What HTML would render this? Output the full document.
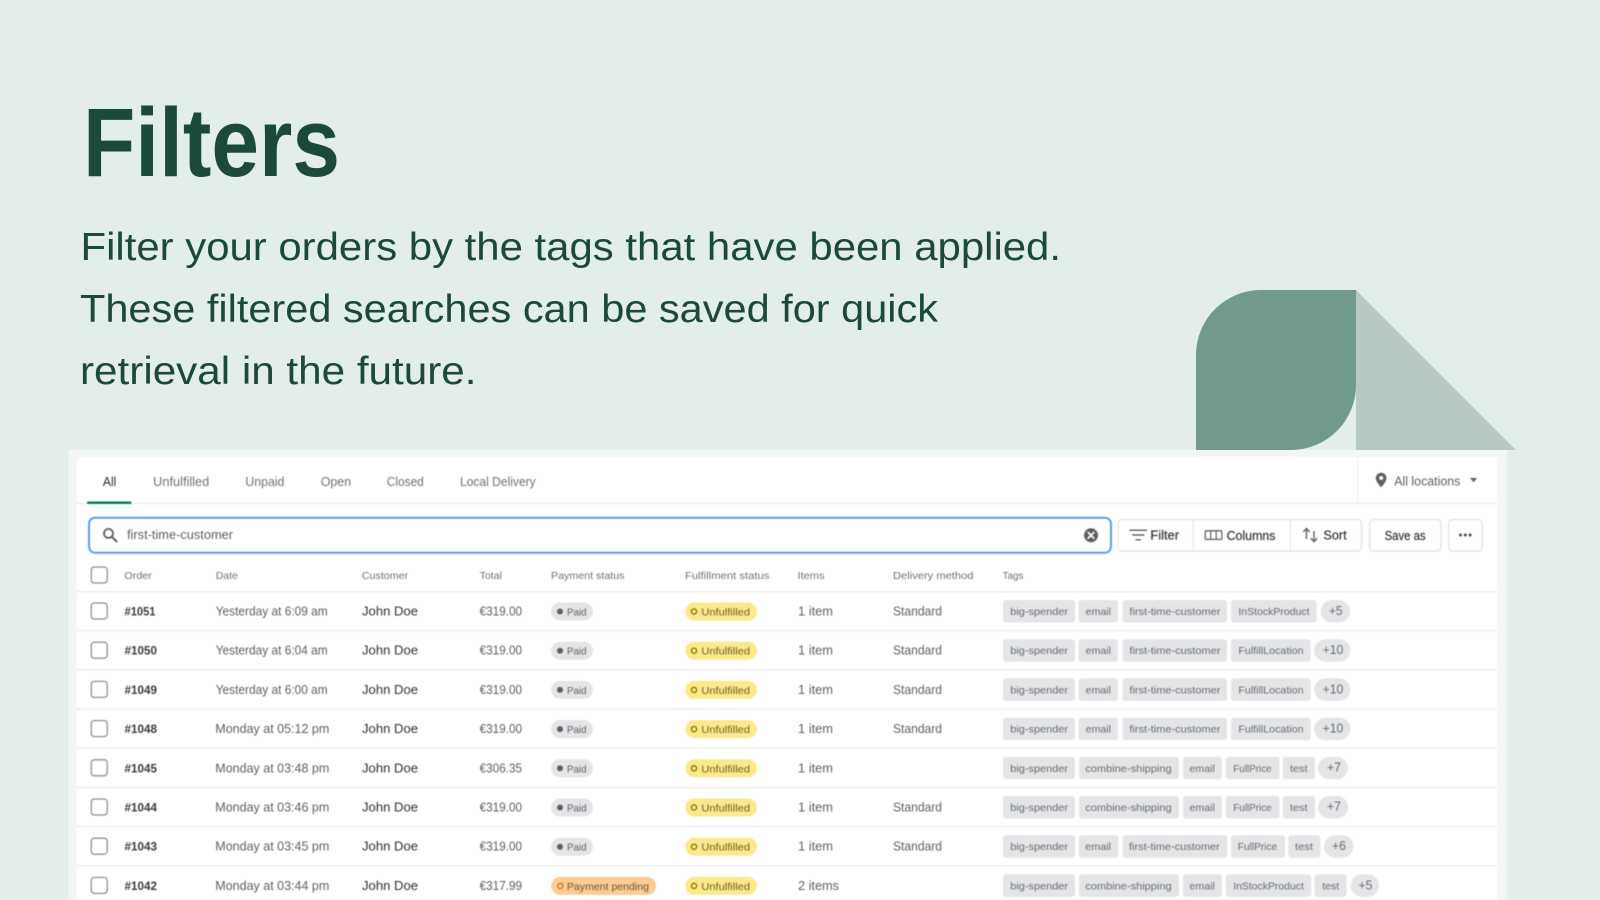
<!DOCTYPE html>
<html lang="en">
<head>
<meta charset="utf-8">
<title>Filters</title>
<style>
html,body{margin:0;padding:0;width:1600px;height:900px;overflow:hidden;background:#e3ede9}
svg{display:block;position:absolute;left:0;top:0}
text{font-family:"Liberation Sans",sans-serif}
#ui{filter:blur(.45px)}
.g{fill:#6d7175;font-size:12.5px}
.h{fill:#6d7175;font-size:10.5px}
.o{fill:#3a3a3a;font-size:12px;font-weight:bold}
.d{fill:#5c5f62;font-size:12.5px}
.n{fill:#303030;font-size:13px}
.b{fill:#5c5f62;font-size:10.5px}
.y{fill:#6b5f2a;font-size:10.5px}
.t{fill:#666a70;font-size:10.5px}
.p{fill:#666a70;font-size:13px}
.k{fill:#e4e5e7}
.btn{fill:#303438;font-size:12.5px}
.cb{fill:#fff;stroke:#8c9196;stroke-width:1.3}
.ln{stroke:#eceef0;stroke-width:1.5}
</style>
</head>
<body>
<svg width="1600" height="900" viewBox="0 0 1600 900" xmlns="http://www.w3.org/2000/svg">
<rect width="1600" height="900" fill="#e3ede9"/>
<text x="83" y="176" font-size="97" font-weight="bold" fill="#1c4a3a" textLength="257" lengthAdjust="spacingAndGlyphs">Filters</text>
<g fill="#1c4a3a" font-size="39">
<text x="80.5" y="260" textLength="980.5" lengthAdjust="spacingAndGlyphs">Filter your orders by the tags that have been applied.</text>
<text x="80" y="322" textLength="858" lengthAdjust="spacingAndGlyphs">These filtered searches can be saved for quick</text>
<text x="80" y="384" textLength="396.5" lengthAdjust="spacingAndGlyphs">retrieval in the future.</text>
</g>
<path d="M1261 290H1356V385A65 65 0 0 1 1291 450H1196V355A65 65 0 0 1 1261 290Z" fill="#709b8c"/>
<path d="M1356 290L1516 450H1356Z" fill="#b5c9c2"/>
<rect x="68.5" y="450" width="1438.5" height="450" fill="#f3f5f6"/>
<g id="ui">
<path d="M76.5 900V463A6 6 0 0 1 82.5 457H1491A6 6 0 0 1 1497 463V900Z" fill="#fff"/>

<text class="g" x="102.9" y="486" textLength="13.5" lengthAdjust="spacingAndGlyphs" style="fill:#303030">All</text>
<text class="g" x="153.2" y="486" textLength="56" lengthAdjust="spacingAndGlyphs">Unfulfilled</text>
<text class="g" x="245.4" y="486" textLength="39" lengthAdjust="spacingAndGlyphs">Unpaid</text>
<text class="g" x="320.7" y="486" textLength="30.5" lengthAdjust="spacingAndGlyphs">Open</text>
<text class="g" x="386.8" y="486" textLength="37" lengthAdjust="spacingAndGlyphs">Closed</text>
<text class="g" x="460" y="486" textLength="75.7" lengthAdjust="spacingAndGlyphs">Local Delivery</text>
<line x1="76.5" x2="1497" y1="503.5" y2="503.5" stroke="#e8eaec" stroke-width="1"/>
<rect x="87" y="501.5" width="44.5" height="2.5" rx="1" fill="#008060"/>
<line x1="1357.8" x2="1357.8" y1="457" y2="503" stroke="#eceef0" stroke-width="1"/>
<path d="M1381.2 472.7c-3 0-5.4 2.4-5.4 5.3 0 3.8 5.4 9.3 5.4 9.3s5.3-5.5 5.3-9.3c0-2.9-2.4-5.3-5.3-5.3zm0 7.3a2 2 0 1 1 0-4 2 2 0 0 1 0 4z" fill="#5c5f62"/>
<text class="g" x="1394.2" y="485.5" textLength="66.2" lengthAdjust="spacingAndGlyphs" style="fill:#5c5f62">All locations</text>
<path d="M1470 478h7.2l-3.6 4.2z" fill="#5c5f62"/>

<rect x="89" y="517.7" width="1022" height="35" rx="6" fill="#fff" stroke="#5a9bf0" stroke-width="2"/>
<circle cx="108.5" cy="533.4" r="4.5" fill="none" stroke="#5c5f62" stroke-width="1.8"/>
<path d="M111.8 536.8l4.8 4.6" stroke="#5c5f62" stroke-width="2" stroke-linecap="round"/>
<text x="127" y="539" font-size="12.5" fill="#5c5f62" textLength="106" lengthAdjust="spacingAndGlyphs">first-time-customer</text>
<circle cx="1091" cy="535.3" r="7" fill="#5c5f62"/>
<path d="M1088.2 532.5l5.6 5.6M1093.8 532.5l-5.6 5.6" stroke="#fff" stroke-width="1.7" stroke-linecap="round"/>

<rect x="1118" y="519.5" width="243.5" height="31.5" rx="4" fill="#fff" stroke="#dfe1e4" stroke-width="1.2"/>
<path d="M1193.3 520v31M1290.5 520v31" stroke="#e3e4e6" stroke-width="1"/>
<path d="M1130 530.2h16.5M1132.8 535h11M1136 539.8h4.5" stroke="#5c5f62" stroke-width="1.4" stroke-linecap="round"/>
<text class="btn" x="1150.4" y="539.5" textLength="28.6" lengthAdjust="spacingAndGlyphs" font-weight="bold" style="font-weight:normal;stroke:#303438;stroke-width:.2">Filter</text>
<rect x="1205.2" y="530.8" width="16.6" height="8.6" rx="1.2" fill="none" stroke="#5c5f62" stroke-width="1.3"/>
<path d="M1210.8 530.8v8.6M1216.2 530.8v8.6" stroke="#5c5f62" stroke-width="1.2"/>
<text class="btn" x="1226.6" y="540" textLength="48.9" lengthAdjust="spacingAndGlyphs" style="stroke:#303438;stroke-width:.2">Columns</text>
<path d="M1306.5 539v-10M1303.3 532l3.2-3.5 3.2 3.5M1314 531v10.3M1310.8 538.2l3.2 3.5 3.2-3.5" fill="none" stroke="#5c5f62" stroke-width="1.4"/>
<text class="btn" x="1323.4" y="539.5" textLength="23.3" lengthAdjust="spacingAndGlyphs" style="stroke:#303438;stroke-width:.2">Sort</text>
<rect x="1369.5" y="519.5" width="71.5" height="31.5" rx="4" fill="#fff" stroke="#dfe1e4" stroke-width="1.2"/>
<text class="btn" x="1384.6" y="540" textLength="41" lengthAdjust="spacingAndGlyphs" style="stroke:#303438;stroke-width:.2">Save as</text>
<rect x="1448.7" y="519.5" width="33.5" height="31.5" rx="4" fill="#fff" stroke="#dfe1e4" stroke-width="1.2"/>
<circle cx="1460.5" cy="535" r="1.5" fill="#44474a"/><circle cx="1465.3" cy="535" r="1.5" fill="#44474a"/><circle cx="1470.1" cy="535" r="1.5" fill="#44474a"/>

<rect class="cb" x="91.2" y="567" width="16" height="16" rx="3"/>
<text class="h" x="124.3" y="579" textLength="27.7" lengthAdjust="spacingAndGlyphs">Order</text>
<text class="h" x="215.7" y="579" textLength="22.2" lengthAdjust="spacingAndGlyphs">Date</text>
<text class="h" x="361.8" y="579" textLength="46.4" lengthAdjust="spacingAndGlyphs">Customer</text>
<text class="h" x="479.6" y="579" textLength="22.4" lengthAdjust="spacingAndGlyphs">Total</text>
<text class="h" x="551" y="579" textLength="73.5" lengthAdjust="spacingAndGlyphs">Payment status</text>
<text class="h" x="685" y="579" textLength="84.4" lengthAdjust="spacingAndGlyphs">Fulfillment status</text>
<text class="h" x="797.5" y="579" textLength="27" lengthAdjust="spacingAndGlyphs">Items</text>
<text class="h" x="893" y="579" textLength="80.5" lengthAdjust="spacingAndGlyphs">Delivery method</text>
<text class="h" x="1002.5" y="579" textLength="21" lengthAdjust="spacingAndGlyphs">Tags</text>
<line class="ln" x1="76.5" x2="1497" y1="591.7" y2="591.7"/>

<g transform="translate(0,611)">
<line class="ln" x1="76.5" x2="1497" y1="19.6" y2="19.6"/>
<rect class="cb" x="91.2" y="-8" width="16" height="16" rx="3"/>
<text class="o" x="124.5" y="4.5" textLength="31" lengthAdjust="spacingAndGlyphs">#1051</text>
<text class="d" x="215.7" y="4.5" textLength="112" lengthAdjust="spacingAndGlyphs">Yesterday at 6:09 am</text>
<text class="n" x="362" y="4.5" textLength="56" lengthAdjust="spacingAndGlyphs">John Doe</text>
<text class="d" x="479.6" y="4.5" textLength="42.5" lengthAdjust="spacingAndGlyphs">€319.00</text>
<rect class="k" x="551" y="-8.5" width="42" height="18" rx="9"/><circle cx="560" cy=".5" r="3" fill="#5c5f62"/><text class="b" x="567" y="4.5" textLength="19.5" lengthAdjust="spacingAndGlyphs">Paid</text>
<rect x="685.3" y="-8.5" width="71.7" height="18" rx="9" fill="#fde98b"/><circle cx="694" cy=".5" r="2.6" fill="none" stroke="#8a6a00" stroke-width="1.3"/><text class="y" x="701.4" y="4.5" textLength="48.6" lengthAdjust="spacingAndGlyphs">Unfulfilled</text>
<text class="d" x="798" y="4.5" textLength="35" lengthAdjust="spacingAndGlyphs">1 item</text>
<text class="d" x="893" y="4.5" textLength="49" lengthAdjust="spacingAndGlyphs">Standard</text>
<rect class="k" x="1003" y="-11" width="72" height="22.5" rx="3"/><text class="t" x="1010.3" y="4" textLength="57.7" lengthAdjust="spacingAndGlyphs">big-spender</text>
<rect class="k" x="1078.6" y="-11" width="39.4" height="22.5" rx="3"/><text class="t" x="1085.7" y="4" textLength="25.3" lengthAdjust="spacingAndGlyphs">email</text>
<rect class="k" x="1122.5" y="-11" width="104.5" height="22.5" rx="3"/><text class="t" x="1129.4" y="4" textLength="91" lengthAdjust="spacingAndGlyphs">first-time-customer</text>
<rect class="k" x="1231" y="-11" width="85.5" height="22.5" rx="3"/><text class="t" x="1238.4" y="4" textLength="71.2" lengthAdjust="spacingAndGlyphs">InStockProduct</text>
<rect class="k" x="1320.7" y="-11" width="29.3" height="22.5" rx="11.2"/><text class="p" x="1329" y="4" textLength="13.5" lengthAdjust="spacingAndGlyphs">+5</text>
</g>

<g transform="translate(0,650.2)">
<line class="ln" x1="76.5" x2="1497" y1="19.6" y2="19.6"/>
<rect class="cb" x="91.2" y="-8" width="16" height="16" rx="3"/>
<text class="o" x="124.5" y="4.5" textLength="32.5" lengthAdjust="spacingAndGlyphs">#1050</text>
<text class="d" x="215.7" y="4.5" textLength="112" lengthAdjust="spacingAndGlyphs">Yesterday at 6:04 am</text>
<text class="n" x="362" y="4.5" textLength="56" lengthAdjust="spacingAndGlyphs">John Doe</text>
<text class="d" x="479.6" y="4.5" textLength="42.5" lengthAdjust="spacingAndGlyphs">€319.00</text>
<rect class="k" x="551" y="-8.5" width="42" height="18" rx="9"/><circle cx="560" cy=".5" r="3" fill="#5c5f62"/><text class="b" x="567" y="4.5" textLength="19.5" lengthAdjust="spacingAndGlyphs">Paid</text>
<rect x="685.3" y="-8.5" width="71.7" height="18" rx="9" fill="#fde98b"/><circle cx="694" cy=".5" r="2.6" fill="none" stroke="#8a6a00" stroke-width="1.3"/><text class="y" x="701.4" y="4.5" textLength="48.6" lengthAdjust="spacingAndGlyphs">Unfulfilled</text>
<text class="d" x="798" y="4.5" textLength="35" lengthAdjust="spacingAndGlyphs">1 item</text>
<text class="d" x="893" y="4.5" textLength="49" lengthAdjust="spacingAndGlyphs">Standard</text>
<rect class="k" x="1003" y="-11" width="72" height="22.5" rx="3"/><text class="t" x="1010.3" y="4" textLength="57.7" lengthAdjust="spacingAndGlyphs">big-spender</text>
<rect class="k" x="1078.6" y="-11" width="39.4" height="22.5" rx="3"/><text class="t" x="1085.7" y="4" textLength="25.3" lengthAdjust="spacingAndGlyphs">email</text>
<rect class="k" x="1122.5" y="-11" width="104.5" height="22.5" rx="3"/><text class="t" x="1129.4" y="4" textLength="91" lengthAdjust="spacingAndGlyphs">first-time-customer</text>
<rect class="k" x="1231" y="-11" width="79.8" height="22.5" rx="3"/><text class="t" x="1238.4" y="4" textLength="65.1" lengthAdjust="spacingAndGlyphs">FulfillLocation</text>
<rect class="k" x="1314.2" y="-11" width="36.3" height="22.5" rx="11.2"/><text class="p" x="1322.6" y="4" textLength="20.7" lengthAdjust="spacingAndGlyphs">+10</text>
</g>

<g transform="translate(0,689.4)">
<line class="ln" x1="76.5" x2="1497" y1="19.6" y2="19.6"/>
<rect class="cb" x="91.2" y="-8" width="16" height="16" rx="3"/>
<text class="o" x="124.5" y="4.5" textLength="32.5" lengthAdjust="spacingAndGlyphs">#1049</text>
<text class="d" x="215.7" y="4.5" textLength="112" lengthAdjust="spacingAndGlyphs">Yesterday at 6:00 am</text>
<text class="n" x="362" y="4.5" textLength="56" lengthAdjust="spacingAndGlyphs">John Doe</text>
<text class="d" x="479.6" y="4.5" textLength="42.5" lengthAdjust="spacingAndGlyphs">€319.00</text>
<rect class="k" x="551" y="-8.5" width="42" height="18" rx="9"/><circle cx="560" cy=".5" r="3" fill="#5c5f62"/><text class="b" x="567" y="4.5" textLength="19.5" lengthAdjust="spacingAndGlyphs">Paid</text>
<rect x="685.3" y="-8.5" width="71.7" height="18" rx="9" fill="#fde98b"/><circle cx="694" cy=".5" r="2.6" fill="none" stroke="#8a6a00" stroke-width="1.3"/><text class="y" x="701.4" y="4.5" textLength="48.6" lengthAdjust="spacingAndGlyphs">Unfulfilled</text>
<text class="d" x="798" y="4.5" textLength="35" lengthAdjust="spacingAndGlyphs">1 item</text>
<text class="d" x="893" y="4.5" textLength="49" lengthAdjust="spacingAndGlyphs">Standard</text>
<rect class="k" x="1003" y="-11" width="72" height="22.5" rx="3"/><text class="t" x="1010.3" y="4" textLength="57.7" lengthAdjust="spacingAndGlyphs">big-spender</text>
<rect class="k" x="1078.6" y="-11" width="39.4" height="22.5" rx="3"/><text class="t" x="1085.7" y="4" textLength="25.3" lengthAdjust="spacingAndGlyphs">email</text>
<rect class="k" x="1122.5" y="-11" width="104.5" height="22.5" rx="3"/><text class="t" x="1129.4" y="4" textLength="91" lengthAdjust="spacingAndGlyphs">first-time-customer</text>
<rect class="k" x="1231" y="-11" width="79.8" height="22.5" rx="3"/><text class="t" x="1238.4" y="4" textLength="65.1" lengthAdjust="spacingAndGlyphs">FulfillLocation</text>
<rect class="k" x="1314.2" y="-11" width="36.3" height="22.5" rx="11.2"/><text class="p" x="1322.6" y="4" textLength="20.7" lengthAdjust="spacingAndGlyphs">+10</text>
</g>

<g transform="translate(0,728.6)">
<line class="ln" x1="76.5" x2="1497" y1="19.6" y2="19.6"/>
<rect class="cb" x="91.2" y="-8" width="16" height="16" rx="3"/>
<text class="o" x="124.5" y="4.5" textLength="32.5" lengthAdjust="spacingAndGlyphs">#1048</text>
<text class="d" x="215.3" y="4.5" textLength="114" lengthAdjust="spacingAndGlyphs">Monday at 05:12 pm</text>
<text class="n" x="362" y="4.5" textLength="56" lengthAdjust="spacingAndGlyphs">John Doe</text>
<text class="d" x="479.6" y="4.5" textLength="42.5" lengthAdjust="spacingAndGlyphs">€319.00</text>
<rect class="k" x="551" y="-8.5" width="42" height="18" rx="9"/><circle cx="560" cy=".5" r="3" fill="#5c5f62"/><text class="b" x="567" y="4.5" textLength="19.5" lengthAdjust="spacingAndGlyphs">Paid</text>
<rect x="685.3" y="-8.5" width="71.7" height="18" rx="9" fill="#fde98b"/><circle cx="694" cy=".5" r="2.6" fill="none" stroke="#8a6a00" stroke-width="1.3"/><text class="y" x="701.4" y="4.5" textLength="48.6" lengthAdjust="spacingAndGlyphs">Unfulfilled</text>
<text class="d" x="798" y="4.5" textLength="35" lengthAdjust="spacingAndGlyphs">1 item</text>
<text class="d" x="893" y="4.5" textLength="49" lengthAdjust="spacingAndGlyphs">Standard</text>
<rect class="k" x="1003" y="-11" width="72" height="22.5" rx="3"/><text class="t" x="1010.3" y="4" textLength="57.7" lengthAdjust="spacingAndGlyphs">big-spender</text>
<rect class="k" x="1078.6" y="-11" width="39.4" height="22.5" rx="3"/><text class="t" x="1085.7" y="4" textLength="25.3" lengthAdjust="spacingAndGlyphs">email</text>
<rect class="k" x="1122.5" y="-11" width="104.5" height="22.5" rx="3"/><text class="t" x="1129.4" y="4" textLength="91" lengthAdjust="spacingAndGlyphs">first-time-customer</text>
<rect class="k" x="1231" y="-11" width="79.8" height="22.5" rx="3"/><text class="t" x="1238.4" y="4" textLength="65.1" lengthAdjust="spacingAndGlyphs">FulfillLocation</text>
<rect class="k" x="1314.2" y="-11" width="36.3" height="22.5" rx="11.2"/><text class="p" x="1322.6" y="4" textLength="20.7" lengthAdjust="spacingAndGlyphs">+10</text>
</g>

<g transform="translate(0,767.8)">
<line class="ln" x1="76.5" x2="1497" y1="19.6" y2="19.6"/>
<rect class="cb" x="91.2" y="-8" width="16" height="16" rx="3"/>
<text class="o" x="124.5" y="4.5" textLength="32.5" lengthAdjust="spacingAndGlyphs">#1045</text>
<text class="d" x="215.3" y="4.5" textLength="114" lengthAdjust="spacingAndGlyphs">Monday at 03:48 pm</text>
<text class="n" x="362" y="4.5" textLength="56" lengthAdjust="spacingAndGlyphs">John Doe</text>
<text class="d" x="479.6" y="4.5" textLength="42.5" lengthAdjust="spacingAndGlyphs">€306.35</text>
<rect class="k" x="551" y="-8.5" width="42" height="18" rx="9"/><circle cx="560" cy=".5" r="3" fill="#5c5f62"/><text class="b" x="567" y="4.5" textLength="19.5" lengthAdjust="spacingAndGlyphs">Paid</text>
<rect x="685.3" y="-8.5" width="71.7" height="18" rx="9" fill="#fde98b"/><circle cx="694" cy=".5" r="2.6" fill="none" stroke="#8a6a00" stroke-width="1.3"/><text class="y" x="701.4" y="4.5" textLength="48.6" lengthAdjust="spacingAndGlyphs">Unfulfilled</text>
<text class="d" x="798" y="4.5" textLength="35" lengthAdjust="spacingAndGlyphs">1 item</text>
<rect class="k" x="1003" y="-11" width="72" height="22.5" rx="3"/><text class="t" x="1010.3" y="4" textLength="57.7" lengthAdjust="spacingAndGlyphs">big-spender</text>
<rect class="k" x="1079" y="-11" width="100" height="22.5" rx="3"/><text class="t" x="1085.3" y="4" textLength="86.3" lengthAdjust="spacingAndGlyphs">combine-shipping</text>
<rect class="k" x="1183" y="-11" width="39" height="22.5" rx="3"/><text class="t" x="1189.5" y="4" textLength="25.3" lengthAdjust="spacingAndGlyphs">email</text>
<rect class="k" x="1225.8" y="-11" width="53.7" height="22.5" rx="3"/><text class="t" x="1233.2" y="4" textLength="38.5" lengthAdjust="spacingAndGlyphs">FullPrice</text>
<rect class="k" x="1282.8" y="-11" width="32.2" height="22.5" rx="3"/><text class="t" x="1290" y="4" textLength="17.5" lengthAdjust="spacingAndGlyphs">test</text>
<rect class="k" x="1318" y="-11" width="30" height="22.5" rx="11.2"/><text class="p" x="1327" y="3.5" textLength="14" lengthAdjust="spacingAndGlyphs">+7</text>
</g>

<g transform="translate(0,807)">
<line class="ln" x1="76.5" x2="1497" y1="19.6" y2="19.6"/>
<rect class="cb" x="91.2" y="-8" width="16" height="16" rx="3"/>
<text class="o" x="124.5" y="4.5" textLength="32.5" lengthAdjust="spacingAndGlyphs">#1044</text>
<text class="d" x="215.3" y="4.5" textLength="114" lengthAdjust="spacingAndGlyphs">Monday at 03:46 pm</text>
<text class="n" x="362" y="4.5" textLength="56" lengthAdjust="spacingAndGlyphs">John Doe</text>
<text class="d" x="479.6" y="4.5" textLength="42.5" lengthAdjust="spacingAndGlyphs">€319.00</text>
<rect class="k" x="551" y="-8.5" width="42" height="18" rx="9"/><circle cx="560" cy=".5" r="3" fill="#5c5f62"/><text class="b" x="567" y="4.5" textLength="19.5" lengthAdjust="spacingAndGlyphs">Paid</text>
<rect x="685.3" y="-8.5" width="71.7" height="18" rx="9" fill="#fde98b"/><circle cx="694" cy=".5" r="2.6" fill="none" stroke="#8a6a00" stroke-width="1.3"/><text class="y" x="701.4" y="4.5" textLength="48.6" lengthAdjust="spacingAndGlyphs">Unfulfilled</text>
<text class="d" x="798" y="4.5" textLength="35" lengthAdjust="spacingAndGlyphs">1 item</text>
<text class="d" x="893" y="4.5" textLength="49" lengthAdjust="spacingAndGlyphs">Standard</text>
<rect class="k" x="1003" y="-11" width="72" height="22.5" rx="3"/><text class="t" x="1010.3" y="4" textLength="57.7" lengthAdjust="spacingAndGlyphs">big-spender</text>
<rect class="k" x="1079" y="-11" width="100" height="22.5" rx="3"/><text class="t" x="1085.3" y="4" textLength="86.3" lengthAdjust="spacingAndGlyphs">combine-shipping</text>
<rect class="k" x="1183" y="-11" width="39" height="22.5" rx="3"/><text class="t" x="1189.5" y="4" textLength="25.3" lengthAdjust="spacingAndGlyphs">email</text>
<rect class="k" x="1225.8" y="-11" width="53.7" height="22.5" rx="3"/><text class="t" x="1233.2" y="4" textLength="38.5" lengthAdjust="spacingAndGlyphs">FullPrice</text>
<rect class="k" x="1282.8" y="-11" width="32.2" height="22.5" rx="3"/><text class="t" x="1290" y="4" textLength="17.5" lengthAdjust="spacingAndGlyphs">test</text>
<rect class="k" x="1318" y="-11" width="30" height="22.5" rx="11.2"/><text class="p" x="1327" y="3.5" textLength="14" lengthAdjust="spacingAndGlyphs">+7</text>
</g>

<g transform="translate(0,846.2)">
<line class="ln" x1="76.5" x2="1497" y1="19.6" y2="19.6"/>
<rect class="cb" x="91.2" y="-8" width="16" height="16" rx="3"/>
<text class="o" x="124.5" y="4.5" textLength="32.5" lengthAdjust="spacingAndGlyphs">#1043</text>
<text class="d" x="215.3" y="4.5" textLength="114" lengthAdjust="spacingAndGlyphs">Monday at 03:45 pm</text>
<text class="n" x="362" y="4.5" textLength="56" lengthAdjust="spacingAndGlyphs">John Doe</text>
<text class="d" x="479.6" y="4.5" textLength="42.5" lengthAdjust="spacingAndGlyphs">€319.00</text>
<rect class="k" x="551" y="-8.5" width="42" height="18" rx="9"/><circle cx="560" cy=".5" r="3" fill="#5c5f62"/><text class="b" x="567" y="4.5" textLength="19.5" lengthAdjust="spacingAndGlyphs">Paid</text>
<rect x="685.3" y="-8.5" width="71.7" height="18" rx="9" fill="#fde98b"/><circle cx="694" cy=".5" r="2.6" fill="none" stroke="#8a6a00" stroke-width="1.3"/><text class="y" x="701.4" y="4.5" textLength="48.6" lengthAdjust="spacingAndGlyphs">Unfulfilled</text>
<text class="d" x="798" y="4.5" textLength="35" lengthAdjust="spacingAndGlyphs">1 item</text>
<text class="d" x="893" y="4.5" textLength="49" lengthAdjust="spacingAndGlyphs">Standard</text>
<rect class="k" x="1003" y="-11" width="72" height="22.5" rx="3"/><text class="t" x="1010.3" y="4" textLength="57.7" lengthAdjust="spacingAndGlyphs">big-spender</text>
<rect class="k" x="1078.9" y="-11" width="39.5" height="22.5" rx="3"/><text class="t" x="1085.3" y="4" textLength="25.7" lengthAdjust="spacingAndGlyphs">email</text>
<rect class="k" x="1122.5" y="-11" width="104.7" height="22.5" rx="3"/><text class="t" x="1129" y="4" textLength="90.8" lengthAdjust="spacingAndGlyphs">first-time-customer</text>
<rect class="k" x="1230.9" y="-11" width="54.1" height="22.5" rx="3"/><text class="t" x="1237.8" y="4" textLength="39.4" lengthAdjust="spacingAndGlyphs">FullPrice</text>
<rect class="k" x="1288.3" y="-11" width="32.1" height="22.5" rx="3"/><text class="t" x="1295" y="4" textLength="18" lengthAdjust="spacingAndGlyphs">test</text>
<rect class="k" x="1324" y="-11" width="29.5" height="22.5" rx="11.2"/><text class="p" x="1332" y="4" textLength="14" lengthAdjust="spacingAndGlyphs">+6</text>
</g>

<g transform="translate(0,885.4)">
<rect class="cb" x="91.2" y="-8" width="16" height="16" rx="3"/>
<text class="o" x="124.5" y="4.5" textLength="32.5" lengthAdjust="spacingAndGlyphs">#1042</text>
<text class="d" x="215.3" y="4.5" textLength="114" lengthAdjust="spacingAndGlyphs">Monday at 03:44 pm</text>
<text class="n" x="362" y="4.5" textLength="56" lengthAdjust="spacingAndGlyphs">John Doe</text>
<text class="d" x="479.6" y="4.5" textLength="42.5" lengthAdjust="spacingAndGlyphs">€317.99</text>
<rect x="551.3" y="-8.5" width="104.7" height="18" rx="9" fill="#fdcb93"/><circle cx="560.3" cy=".5" r="2.6" fill="none" stroke="#b8791a" stroke-width="1.3"/><text class="y" x="566.9" y="4.5" textLength="82.1" lengthAdjust="spacingAndGlyphs" style="fill:#6f5433">Payment pending</text>
<rect x="685.3" y="-8.5" width="71.7" height="18" rx="9" fill="#fde98b"/><circle cx="694" cy=".5" r="2.6" fill="none" stroke="#8a6a00" stroke-width="1.3"/><text class="y" x="701.4" y="4.5" textLength="48.6" lengthAdjust="spacingAndGlyphs">Unfulfilled</text>
<text class="d" x="798" y="4.5" textLength="41" lengthAdjust="spacingAndGlyphs">2 items</text>
<rect class="k" x="1003" y="-11" width="72" height="22.5" rx="3"/><text class="t" x="1010.3" y="4" textLength="57.7" lengthAdjust="spacingAndGlyphs">big-spender</text>
<rect class="k" x="1079" y="-11" width="100" height="22.5" rx="3"/><text class="t" x="1085.3" y="4" textLength="86.3" lengthAdjust="spacingAndGlyphs">combine-shipping</text>
<rect class="k" x="1183" y="-11" width="39" height="22.5" rx="3"/><text class="t" x="1189.5" y="4" textLength="25.3" lengthAdjust="spacingAndGlyphs">email</text>
<rect class="k" x="1225.8" y="-11" width="85.4" height="22.5" rx="3"/><text class="t" x="1233.2" y="4" textLength="70.7" lengthAdjust="spacingAndGlyphs">InStockProduct</text>
<rect class="k" x="1314.4" y="-11" width="32.2" height="22.5" rx="3"/><text class="t" x="1322.2" y="4" textLength="17" lengthAdjust="spacingAndGlyphs">test</text>
<rect class="k" x="1350.7" y="-11" width="28.3" height="22.5" rx="11.2"/><text class="p" x="1358.5" y="4" textLength="13.8" lengthAdjust="spacingAndGlyphs">+5</text>
</g>
</g>
</svg>
</body>
</html>
